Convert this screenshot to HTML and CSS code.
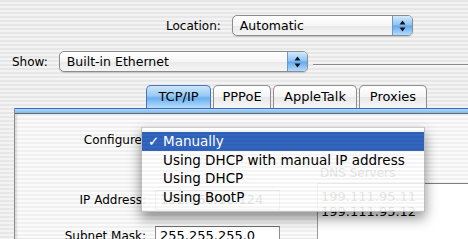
FILE: index.html
```html
<!DOCTYPE html>
<html lang="en">
<head>
    <meta charset="UTF-8">
    <title>Network</title>
    <link rel="stylesheet" href="styles.css">
</head>
<body>

<div class="window">
    <div class="location-row">
        <span class="label">Location:</span>
        <div class="popup popup-location">
            <span class="popup-text">Automatic</span>
            <span class="popup-arrows">
                <svg width="19" height="19" viewBox="0 0 19 19"><path d="M6.5 8.5 L12.5 8.5 L9.5 4.5 Z M6.5 11.5 L12.5 11.5 L9.5 15.5 Z" fill="#111"/></svg>
            </span>
        </div>
    </div>

    <div class="show-row">
        <span class="label">Show:</span>
        <div class="popup popup-show">
            <span class="popup-text">Built-in Ethernet</span>
            <span class="popup-arrows">
                <svg width="19" height="19" viewBox="0 0 19 19"><path d="M6.5 8.5 L12.5 8.5 L9.5 4.5 Z M6.5 11.5 L12.5 11.5 L9.5 15.5 Z" fill="#111"/></svg>
            </span>
        </div>
        <div class="rule"></div>
    </div>

    <div class="tabs">
        <div class="tab active tab-tcp">TCP/IP</div>
        <div class="tab tab-pppoe">PPPoE</div>
        <div class="tab tab-appletalk">AppleTalk</div>
        <div class="tab tab-proxies">Proxies</div>
    </div>

    <div class="panel">
        <div class="panel-band"></div>
        <div class="panel-body">
            <div class="form">
                <div class="form-row">
                    <span class="form-label">Configure:</span>
                </div>
                <div class="form-row row-ip">
                    <span class="form-label">IP Address:</span>
                    <span class="field">192.168.10.124</span>
                </div>
                <div class="form-row row-subnet">
                    <span class="form-label">Subnet Mask:</span>
                    <span class="field">255.255.255.0</span>
                </div>
            </div>
            <div class="dns">
                <div class="dns-label">DNS Servers</div>
                <div class="dns-field">
                    <div>199.111.95.11</div>
                    <div>199.111.95.12</div>
                </div>
            </div>
        </div>

        <!-- открытое меню Configure -->
        <div class="menu">
            <div class="menu-item selected"><span class="check">✓</span>Manually</div>
            <div class="menu-item">Using DHCP with manual IP address</div>
            <div class="menu-item">Using DHCP</div>
            <div class="menu-item">Using BootP</div>
        </div>
    </div>
</div>

</body>
</html>
```

FILE: styles.css
```css
body {
    margin: 0;
    font-family: "DejaVu Sans", Verdana, sans-serif;
    color: #000;
}

.window {
    width: 468px;
    height: 239px;
    overflow: hidden;
    background: repeating-linear-gradient(to bottom, #e7e7e7 0 2px, #f3f3f3 2px 4px);
}

.label {
    font-size: 12px;
}

.location-row {
    display: flex;
    align-items: center;
    gap: 11px;
    padding: 15px 0 0 166px;
    height: 21px;
}

.show-row {
    display: flex;
    align-items: center;
    gap: 11px;
    margin-top: 15px;
    padding-left: 12px;
    height: 21px;
}

.popup {
    display: flex;
    box-sizing: border-box;
    height: 21px;
    border: 1px solid #8c8c8c;
    border-radius: 5px;
    background: linear-gradient(#ffffff, #f6f6f6 50%, #e9e9e9 52%, #f5f5f5);
    box-shadow: 0 1px 1px rgba(0, 0, 0, 0.15);
    overflow: hidden;
}

.popup-location {
    width: 181px;
}

.popup-show {
    width: 249px;
}

.popup-text {
    flex: 1;
    padding-left: 7px;
    font-size: 12.5px;
    line-height: 19px;
}

.popup-arrows {
    width: 19px;
    border-left: 1px solid #6f95c9;
    background: linear-gradient(#d4e9fd, #8cc2f3 48%, #62a8ee 52%, #b2dcff);
}

.popup-arrows svg {
    display: block;
}

.rule {
    flex: 1;
    height: 1px;
    margin: 6px 0 0 -6px;
    background: #8a8a8a;
    box-shadow: 0 1px 0 #fafafa;
}

.tabs {
    display: flex;
    gap: 2px;
    margin-top: 13px;
    padding-left: 146px;
    height: 23px;
}

.tab {
    box-sizing: border-box;
    height: 23px;
    border: 1px solid #8e8e8e;
    border-bottom: none;
    border-radius: 5px 5px 0 0;
    background: linear-gradient(#ffffff, #f4f4f4 50%, #e8e8e8 52%, #f7f7f7);
    text-align: center;
    font-size: 13px;
    line-height: 22px;
}

.tab.active {
    border-color: #4a76b6;
    background: linear-gradient(#cde6fb, #96c9f4 45%, #6aafee 55%, #b9defd);
}

.tab-tcp { width: 65px; }
.tab-pppoe { width: 58px; }
.tab-appletalk { width: 84px; }
.tab-proxies { width: 68px; }

.panel {
    position: relative;
    margin-left: 14px;
    border-left: 1px solid #8a8a8a;
    height: 131px;
}

.panel-band {
    height: 6px;
    background: linear-gradient(#3a6cb9 0 1px, #b0d7fa 1px, #80b9ef 5px, #6a6a6a 5px 6px);
}

.panel-body {
    display: flex;
    height: 125px;
    padding-top: 16px;
    box-sizing: border-box;
    background: repeating-linear-gradient(to bottom, #f0f0f0 0 2px, #fbfbfb 2px 4px);
    box-shadow: inset 2px 0 2px rgba(0, 0, 0, 0.12);
}

.form {
    width: 265px;
}

.form-row {
    display: flex;
    align-items: center;
    height: 20px;
}

.row-ip {
    margin-top: 40px;
}

.row-subnet {
    margin-top: 16px;
}

.form-label {
    width: 131px;
    text-align: right;
    font-size: 12px;
}

.field {
    box-sizing: border-box;
    width: 125px;
    height: 20px;
    margin-left: 9px;
    padding-left: 4px;
    border: 1px solid #8d8d8d;
    border-top-color: #6e6e6e;
    background: #fff;
    font-size: 13px;
    line-height: 18px;
}

.dns {
    flex: 1;
    margin-left: 37px;
}

.dns-label {
    margin-top: 35px;
    padding-left: 3px;
    font-size: 12px;
    line-height: 16px;
}

.dns-field {
    height: 80px;
    margin-top: 2px;
    padding: 5px 0 0 3px;
    border-top: 1px solid #7d7d7d;
    border-left: 1px solid #9a9a9a;
    background: #fff;
    font-size: 13px;
    line-height: 15px;
}

.menu {
    position: absolute;
    left: 126px;
    top: 19px;
    box-sizing: border-box;
    width: 284px;
    height: 85px;
    padding-top: 4px;
    border: 1px solid rgba(120, 120, 120, 0.45);
    border-top-color: rgba(120, 120, 120, 0.3);
    background: repeating-linear-gradient(to bottom, rgba(255, 255, 255, 0.9) 0 2px, rgba(244, 244, 244, 0.9) 2px 4px);
    box-shadow: 0 6px 12px rgba(0, 0, 0, 0.45);
}

.menu-item {
    height: 18.6px;
    padding-left: 21px;
    font-size: 13.5px;
    line-height: 18.6px;
    white-space: nowrap;
}

.menu-item.selected {
    padding-left: 6px;
    color: #fff;
    background: repeating-linear-gradient(to bottom, #2f60b8 0 2px, #3566bf 2px 4px);
}

.check {
    display: inline-block;
    width: 15px;
}
```
